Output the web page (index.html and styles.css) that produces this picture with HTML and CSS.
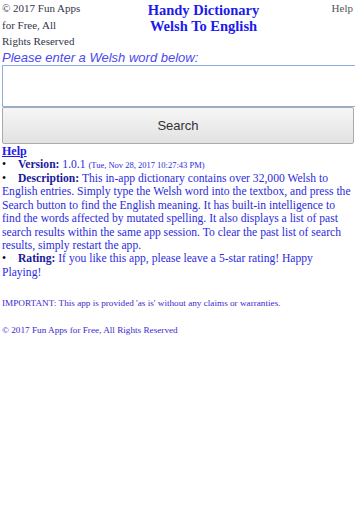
FILE: index.html
```html
<!DOCTYPE html>
<html>
<head>
    <title>Handy Dictionary Welsh To English</title>
    <link rel="stylesheet" href="styles.css">
</head>
<body>
    <div class="header">
        <div class="copy">© 2017 Fun Apps for Free, All Rights Reserved</div>
        <div class="title">Handy Dictionary<br>Welsh To English</div>
        <div class="help-top">Help</div>
    </div>

    <div class="prompt">Please enter a Welsh word below:</div>
    <input class="word" type="text">
    <button class="search">Search</button>

    <a class="help-link" href="#">Help</a>
    <div class="info">
        <div><span class="dot">•</span><b>Version:</b> 1.0.1 <span class="date">(Tue, Nov 28, 2017 10:27:43 PM)</span></div>
        <div><span class="dot">•</span><b>Description:</b> This in-app dictionary contains over 32,000 Welsh to English entries. Simply type the Welsh word into the textbox, and press the Search button to find the English meaning. It has built-in intelligence to find the words affected by mutated spelling. It also displays a list of past search results within the same app session. To clear the past list of search results, simply restart the app.</div>
        <div><span class="dot">•</span><b>Rating:</b> If you like this app, please leave a 5-star rating! Happy Playing!</div>
    </div>

    <p class="small first">IMPORTANT: This app is provided 'as is' without any claims or warranties.</p>
    <p class="small">© 2017 Fun Apps for Free, All Rights Reserved</p>
</body>
</html>
```

FILE: styles.css
```css
body {
    margin: 0;
    padding: 0 0 0 2px;
    font-family: "Liberation Serif", "Times New Roman", serif;
    background: #fff;
}
.header {
    display: flex;
    align-items: flex-start;
}
.copy {
    width: 82px;
    font-size: 11px;
    line-height: 16.5px;
    color: #35354a;
}
.title {
    flex: 1;
    text-align: center;
    font-weight: bold;
    font-size: 14.5px;
    line-height: 16px;
    color: #1a1aee;
    padding-top: 2px;
}
.help-top {
    width: 30px;
    text-align: right;
    padding-right: 2px;
    font-size: 11px;
    line-height: 16.5px;
    color: #555;
}
.prompt {
    font-family: "Liberation Sans", Arial, sans-serif;
    font-style: italic;
    font-size: 13px;
    line-height: 15px;
    color: #4a4af0;
}
.word {
    display: block;
    box-sizing: border-box;
    width: 100%;
    height: 42px;
    margin: 0;
    border: 1px solid #8eaee0;
    border-right: none;
    outline: none;
}
.search {
    display: block;
    box-sizing: border-box;
    width: 352px;
    height: 37px;
    margin: 0;
    border: 1px solid #aaa;
    border-radius: 2px;
    background: linear-gradient(#f6f6f6, #e2e2e2);
    font-family: "Liberation Sans", Arial, sans-serif;
    font-size: 13px;
    color: #333;
}
.help-link {
    display: block;
    width: fit-content;
    font-weight: bold;
    font-size: 12px;
    line-height: 13px;
    margin-top: 1px;
    color: #1a1aee;
}
.info {
    width: 349px;
    font-size: 11.6px;
    line-height: 13.4px;
    color: #2b2bdd;
}
.info b {
    color: #1a1a99;
}
.dot {
    color: #000;
    display: inline-block;
    width: 16px;
    line-height: 1;
}
.date {
    font-size: 8.5px;
}
.small {
    font-size: 9.2px;
    color: #3a2ad0;
    margin: 17px 0 0;
}
.small.first {
    margin-top: 19px;
}
```
